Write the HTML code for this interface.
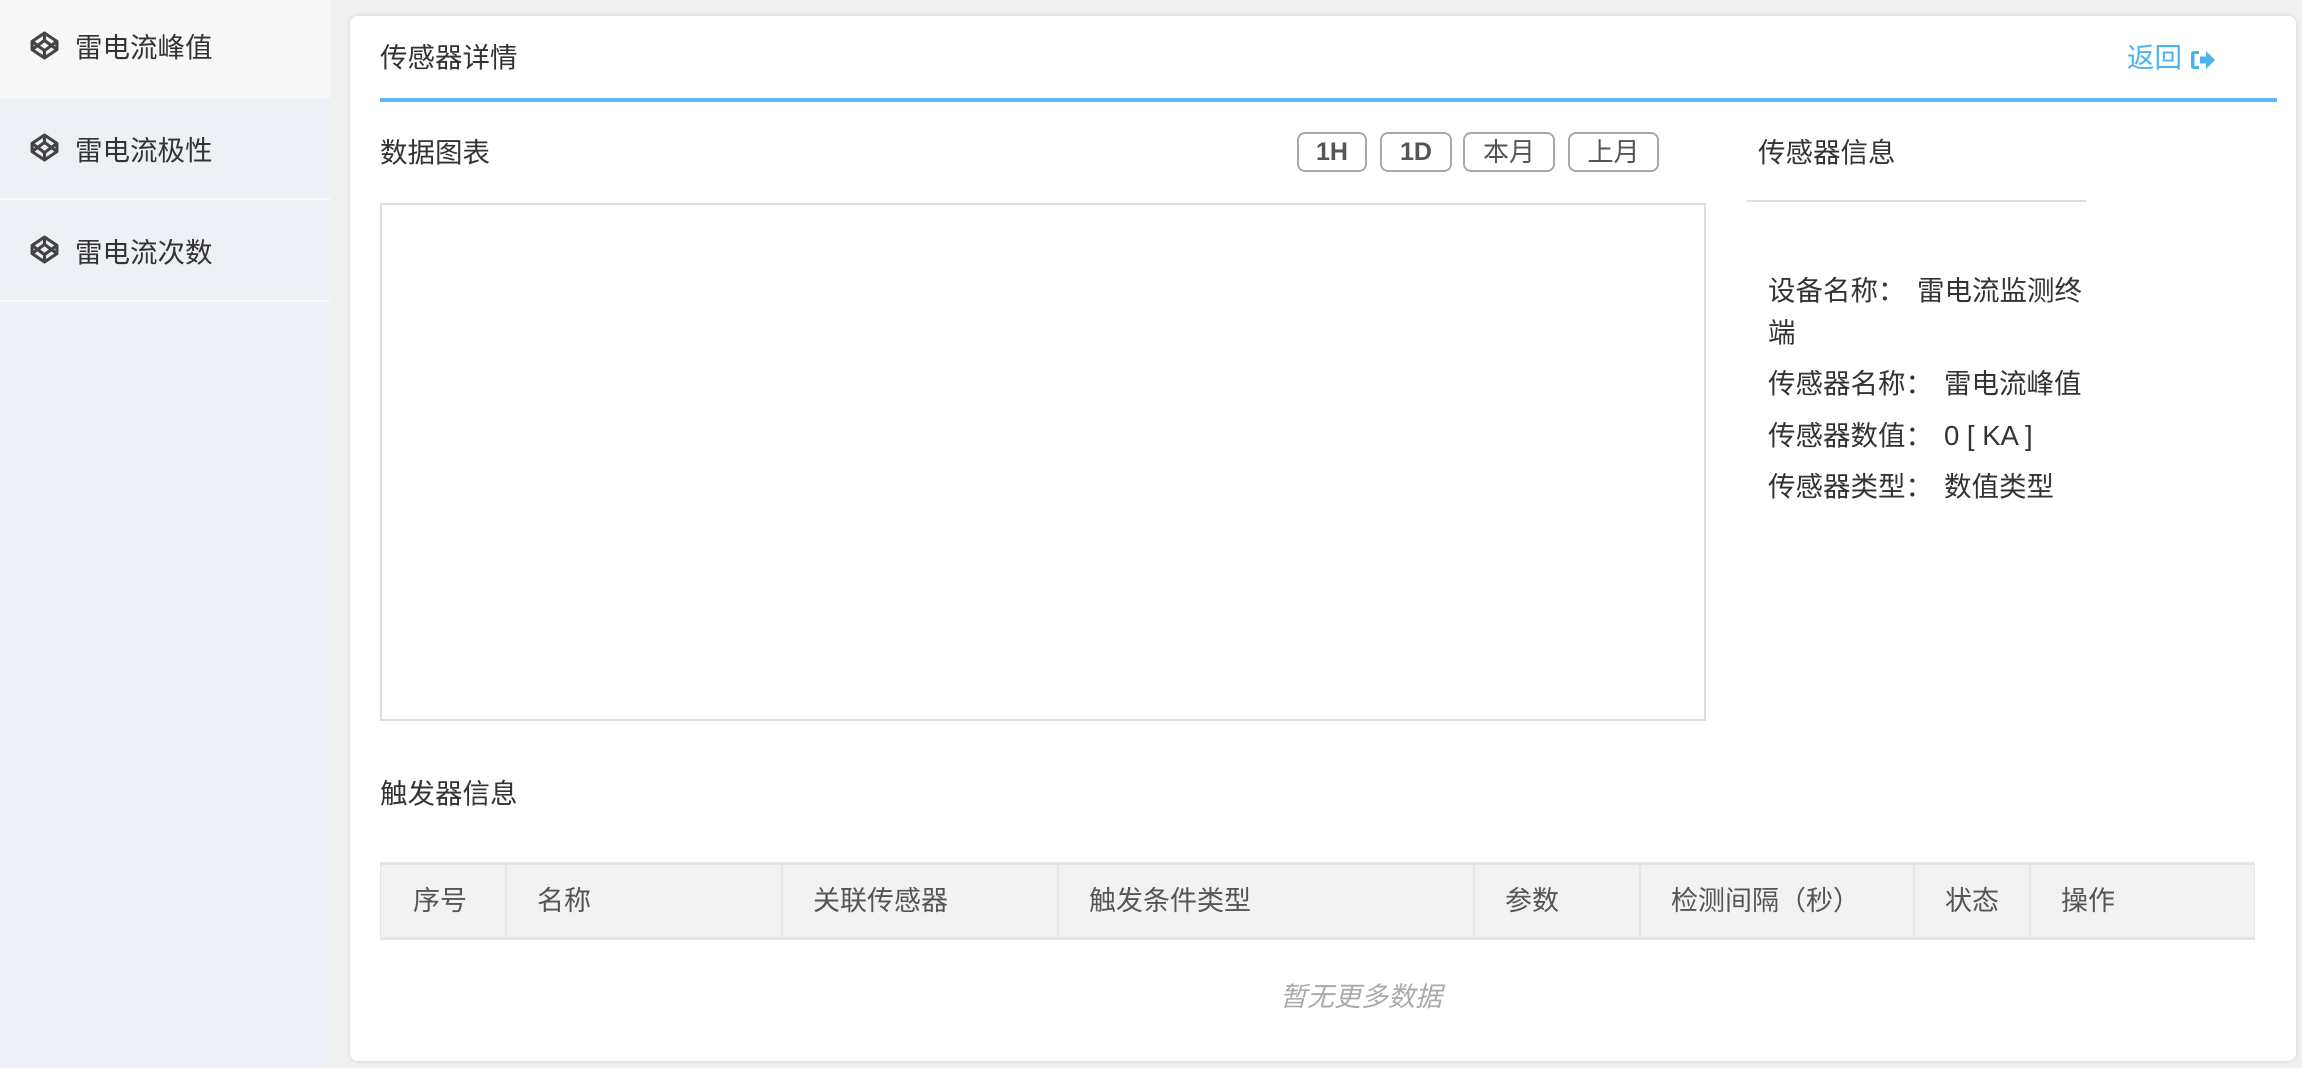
<!DOCTYPE html>
<html><head><meta charset="utf-8"><style>
*{margin:0;padding:0;box-sizing:border-box}
body{width:2302px;height:1068px;background:#f0f0f0;font-family:"Liberation Sans","Noto Sans CJK SC",sans-serif;color:#333;position:relative;overflow:hidden}
.a{position:absolute;white-space:nowrap}
.side{position:absolute;left:0;top:0;width:330px;height:1068px;background:#edf0f5}
.item{position:absolute;left:0;width:330px;font-size:27.5px;color:#333}
.item svg{position:absolute;left:30px}
.item span{position:absolute;left:75px}
.card{position:absolute;left:350px;top:16px;width:1946px;height:1045px;background:#fff;border-radius:8px;box-shadow:0 0 4px rgba(0,0,0,.12)}
.btn{position:absolute;top:132px;height:40px;border:2px solid #a8a8a8;border-radius:8px;color:#555;font-size:25px;font-weight:bold;text-align:center;line-height:36px}
.t{font-size:27.5px;line-height:32px}
.th{position:absolute;top:862px;height:78px;background:#f2f2f2;border:1px solid #e6e6e6;border-top:3px solid #e4e4e4;border-bottom:3px solid #e4e4e4;font-size:27px;color:#555;line-height:72px;padding-left:30px}
</style></head><body>
<div class="side">
  <div class="item" style="top:0;height:98px;background:#f7f7f7"><svg style="top:31px" width="29" height="29" viewBox="0 0 28 28" fill="none" stroke="#444" stroke-width="3" stroke-linejoin="round"><path d="M14 2L26 10V18L14 26L2 18V10Z M14 2V9 M14 19V26 M2 10L14 19L26 10 M2 18L14 9L26 18"/></svg><span style="top:25px">雷电流峰值</span></div>
  <div class="item" style="top:99px;height:99px"><svg style="top:34px" width="29" height="29" viewBox="0 0 28 28" fill="none" stroke="#444" stroke-width="3" stroke-linejoin="round"><path d="M14 2L26 10V18L14 26L2 18V10Z M14 2V9 M14 19V26 M2 10L14 19L26 10 M2 18L14 9L26 18"/></svg><span style="top:29px">雷电流极性</span></div>
  <div style="position:absolute;top:198px;left:0;width:330px;height:2px;background:#f8f8f8"></div>
  <div class="item" style="top:200px;height:100px"><svg style="top:35px" width="29" height="29" viewBox="0 0 28 28" fill="none" stroke="#444" stroke-width="3" stroke-linejoin="round"><path d="M14 2L26 10V18L14 26L2 18V10Z M14 2V9 M14 19V26 M2 10L14 19L26 10 M2 18L14 9L26 18"/></svg><span style="top:30px">雷电流次数</span></div>
  <div style="position:absolute;top:300px;left:0;width:330px;height:2px;background:#f8f8f8"></div>
</div>
<div class="card"></div>
<div class="a t" style="left:380px;top:42px">传感器详情</div>
<div class="a t" style="left:2127px;top:42px;color:#4cb3ef">返回</div>
<svg class="a" style="left:2190px;top:50px" width="26" height="20" viewBox="0 0 26 20"><path d="M9 1H4Q1 1 1 4V16Q1 19 4 19H9V16H4.5V4H9Z" fill="#4cb3ef"/><path d="M10 6.5H16V1L25 10L16 19V13.5H10Z" fill="#4cb3ef"/></svg>
<div class="a" style="left:380px;top:98px;width:1897px;height:4px;background:#5bb8f0"></div>
<div class="a t" style="left:380px;top:137px">数据图表</div>
<div class="btn" style="left:1297px;width:70px">1H</div>
<div class="btn" style="left:1380px;width:72px">1D</div>
<div class="btn" style="left:1463px;width:92px;font-weight:normal;font-size:26px">本月</div>
<div class="btn" style="left:1568px;width:91px;font-weight:normal;font-size:26px">上月</div>
<div class="a" style="left:380px;top:203px;width:1326px;height:518px;border:2px solid #ddd"></div>
<div class="a t" style="left:1758px;top:137px">传感器信息</div>
<div class="a" style="left:1747px;top:200px;width:339px;height:2px;background:#ddd"></div>
<div class="a t" style="left:1768px;top:275px">设备名称：</div>
<div class="a t" style="left:1917px;top:275px">雷电流监测终</div>
<div class="a t" style="left:1768px;top:317px">端</div>
<div class="a t" style="left:1768px;top:368px">传感器名称：</div>
<div class="a t" style="left:1944px;top:368px">雷电流峰值</div>
<div class="a t" style="left:1768px;top:420px">传感器数值：</div>
<div class="a t" style="left:1944px;top:420px">0 [ KA ]</div>
<div class="a t" style="left:1768px;top:471px">传感器类型：</div>
<div class="a t" style="left:1944px;top:471px">数值类型</div>
<div class="a t" style="left:380px;top:778px">触发器信息</div>
<div class="th" style="left:380px;width:126px;padding-left:32px">序号</div>
<div class="th" style="left:506px;width:276px">名称</div>
<div class="th" style="left:782px;width:276px">关联传感器</div>
<div class="th" style="left:1058px;width:416px">触发条件类型</div>
<div class="th" style="left:1474px;width:166px">参数</div>
<div class="th" style="left:1640px;width:274px">检测间隔（秒）</div>
<div class="th" style="left:1914px;width:116px">状态</div>
<div class="th" style="left:2030px;width:225px">操作</div>
<div class="a" style="left:1280px;top:975px;width:162px;text-align:center;font-size:27px;color:#aaa;font-style:italic">暂无更多数据</div>
</body></html>
